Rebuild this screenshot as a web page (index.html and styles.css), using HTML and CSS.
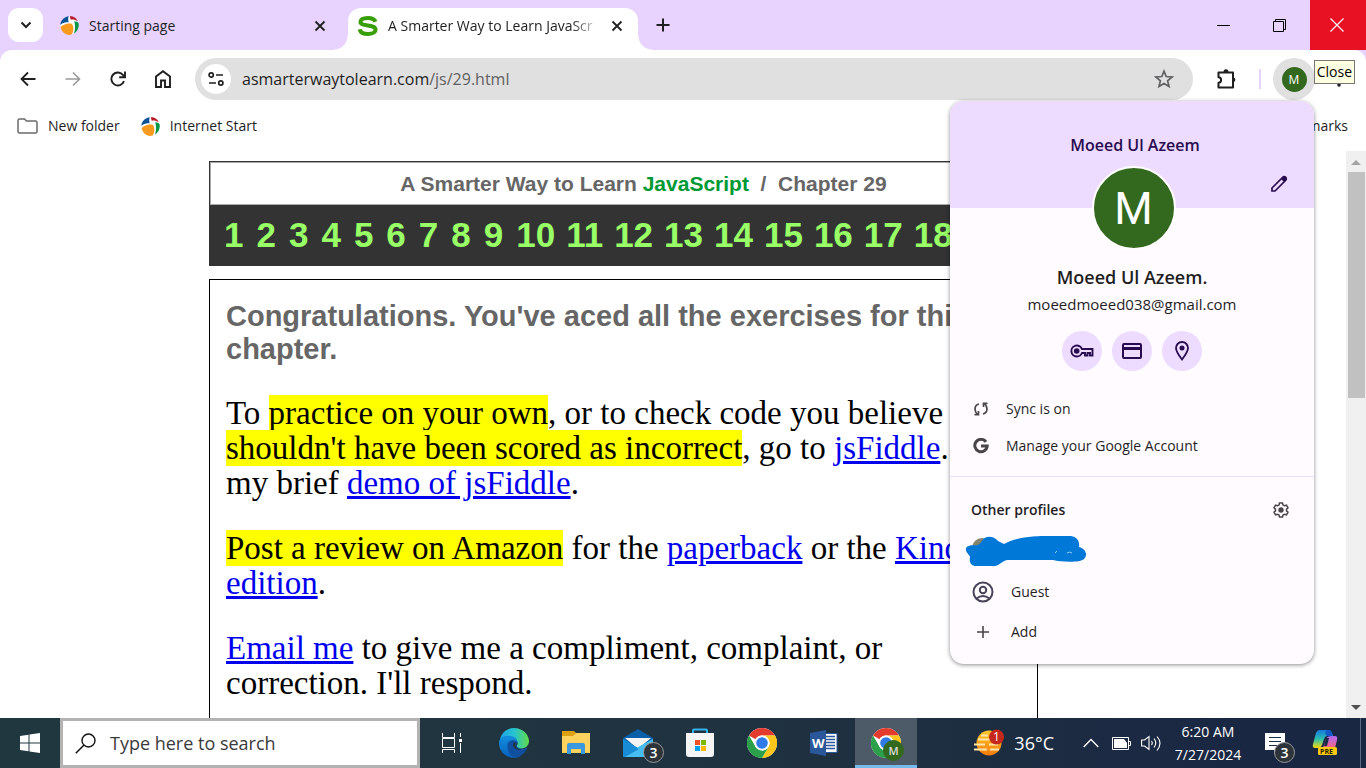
FILE: index.html
```html
<!DOCTYPE html>
<html lang="en">
<head>
<meta charset="utf-8">
<title>A Smarter Way to Learn JavaScript</title>
<link rel="stylesheet" href="styles.css">
</head>
<body>
<svg class="defs" aria-hidden="true">
  <symbol id="ball" viewBox="0 0 18 18">
    <circle cx="9" cy="9" r="8.5" fill="#fff"/>
    <path d="M0.3 8.2C.8 4 4 .8 8.2.3C7.5 3 7.8 4.500 8.200 6C5 6 2.500 6.500.3 8.200Z" fill="#0b5394"/>
    <path d="M9.500 0C13 .2 15.500 2 16.800 4.800C14.500 3.400 12 3 10.200 3.500C9.600 2.300 9.400 1.200 9.500 0Z" fill="#b81c2c"/>
    <path d="M13.500 5C15.500 5 17 5.800 17.700 7.200C18.300 11 16.300 14.800 13.300 16.700C14.500 12.500 14.500 8.500 13.500 5Z" fill="#0a9648"/>
    <path d="M.6 10.500C3.500 7.500 8 6.500 11.500 7.500C13.200 10.500 13 14.500 11 17.600C6 19 1.500 15.800.6 10.500Z" fill="#f79a1e"/>
  </symbol>
  <symbol id="chrome" viewBox="0 0 30 30">
    <circle cx="15" cy="15" r="15" fill="#fff"/>
    <path d="M15 0A15 15 0 0 1 28 7.500H15A7.500 7.500 0 0 0 8.500 11.250L2 7.500A15 15 0 0 1 15 0Z" fill="#e33b2e"/>
    <path d="M2 7.500L8.500 18.750A7.500 7.500 0 0 0 15 22.500L15 30A15 15 0 0 1 2 7.500Z" fill="#2b9f4a"/>
    <path d="M28 7.500A15 15 0 0 1 15 30L21.500 18.750A7.500 7.500 0 0 0 15 7.500Z" fill="#fcc61a"/>
    <path d="M8.500 18.750A7.500 7.500 0 0 0 21.500 18.750L15 30C13 27 10.500 23 8.500 18.750Z" fill="#2b9f4a"/>
    <circle cx="15" cy="15" r="7.500" fill="#fff"/>
    <circle cx="15" cy="15" r="5.800" fill="#2f7bea"/>
  </symbol>
  <symbol id="cross" viewBox="0 0 12 12"><path d="M1.500 1.500L10.500 10.500M10.500 1.500L1.500 10.500" stroke="currentColor" stroke-width="1.800" fill="none"/></symbol>
</svg>

<header class="tabstrip">
  <button class="tabsearch" aria-label="Search tabs"><svg width="12" height="8" viewBox="0 0 12 8"><path d="M1.500 1.500L6 6L10.500 1.500" stroke="#1f1f1f" stroke-width="2" fill="none"/></svg></button>
  <div class="tab">
    <svg width="19" height="19"><use href="#ball"/></svg>
    <span class="tabtitle">Starting page</span>
    <button class="plain" aria-label="Close tab"><svg width="12" height="12"><use href="#cross"/></svg></button>
  </div>
  <div class="tab active">
    <svg width="20" height="20" viewBox="0 0 20 20"><path d="M17.500 5.800C16.500 3.400 13.600 2 10 2C5.600 2 2.500 3.400 2.500 6C2.500 11 17.500 7.800 17.500 13.500C17.500 16.400 14.200 18 10 18C5.600 18 2.300 16.400 1.800 13.300" stroke="#379e06" stroke-width="4" fill="none"/></svg>
    <span class="tabtitle fade">A Smarter Way to Learn JavaScr</span>
    <button class="plain" aria-label="Close tab"><svg width="12" height="12"><use href="#cross"/></svg></button>
  </div>
  <button class="plain newtab" aria-label="New tab"><svg width="14" height="14" viewBox="0 0 14 14"><path d="M7 .5V13.500M.5 7H13.500" stroke="#1f1f1f" stroke-width="2"/></svg></button>
  <div class="wincontrols">
    <button aria-label="Minimize"><svg width="13" height="13" viewBox="0 0 13 13"><path d="M0 6.500H13" stroke="#000"/></svg></button>
    <button aria-label="Restore"><svg width="13" height="13" viewBox="0 0 13 13"><path d="M.5 2.500H10.500V12.500H.5ZM2.500 2.500V.5H12.500V10.500H10.500" stroke="#000" fill="none"/></svg></button>
    <button class="close" aria-label="Close"><svg width="14" height="14" viewBox="0 0 14 14"><path d="M.5.5L13.500 13.500M13.500.5L.5 13.500" stroke="#fff" stroke-width="1.200"/></svg></button>
  </div>
</header>

<div class="chrome">
  <nav class="toolbar">
    <button class="plain nav" aria-label="Back"><svg width="16" height="16" viewBox="0 0 16 16"><path d="M15.500 8H2M8 1.500L1.500 8L8 14.500" stroke="#1f1f1f" stroke-width="1.800" fill="none"/></svg></button>
    <button class="plain nav" aria-label="Forward"><svg width="16" height="16" viewBox="0 0 16 16"><path d="M.5 8H14M8 1.500L14.500 8L8 14.500" stroke="#9a9a9a" stroke-width="1.600" fill="none"/></svg></button>
    <button class="plain nav" aria-label="Reload"><svg width="16" height="16" viewBox="0 0 16 16"><path d="M14 10.200A6.500 6.500 0 1 1 13.200 4.200L14.500 5.800M15 .5V6.300H9.200" stroke="#1f1f1f" stroke-width="1.900" fill="none"/></svg></button>
    <button class="plain nav" aria-label="Home"><svg width="16" height="18" viewBox="0 0 16 18"><path d="M1 17V6.500L8 1.200L15 6.500V17H10V10.500H6V17Z" stroke="#1f1f1f" stroke-width="1.900" fill="none"/></svg></button>
    <div class="omnibox">
      <button class="siteinfo" aria-label="Site information"><svg width="16" height="14" viewBox="0 0 16 14" fill="none" stroke="#1f1f1f" stroke-width="1.700"><circle cx="3.200" cy="3" r="2.100"/><path d="M8 3H15M1 11H8"/><circle cx="12.800" cy="11" r="2.100"/></svg></button>
      <div class="url" role="textbox" aria-label="Address" tabindex="0">asmarterwaytolearn.com<span>/js/29.html</span></div>
      <button class="plain" aria-label="Bookmark this tab"><svg width="20" height="20" viewBox="0 0 20 20"><path d="M10 2.200L12.200 7.500L18 8L13.600 11.800L15 17.400L10 14.400L5 17.400L6.400 11.800L2 8L7.800 7.500Z" fill="none" stroke="#5f6062" stroke-width="1.700"/></svg></button>
    </div>
    <button class="plain ext" aria-label="Extensions"><svg width="22" height="22" viewBox="0 0 22 22"><path d="M2.500 4.500H17V19.500H2.500V14.800C6 14.500 6 9.500 2.500 9.200Z" fill="none" stroke="#1f1f1f" stroke-width="2" stroke-linejoin="round"/><path d="M7.500 4A2.500 2.700 0 0 1 12.500 4ZM17.500 9.200A2.600 2.600 0 0 1 17.500 14.200Z" fill="#1f1f1f"/></svg></button>
    <span class="divider"></span>
    <button class="avatarbtn" aria-label="Profile"><span class="avatar">M</span></button>
    <button class="plain more" aria-label="Menu"><svg width="4" height="16" viewBox="0 0 4 16" fill="#1f1f1f"><circle cx="2" cy="2" r="1.800"/><circle cx="2" cy="8" r="1.800"/><circle cx="2" cy="14" r="1.800"/></svg></button>
  </nav>
  <nav class="bookmarks">
    <a href="#"><svg width="21" height="16" viewBox="0 0 21 16"><path d="M1 2.500Q1 1 2.500 1H7.500L9.500 3H18.500Q20 3 20 4.500V13.500Q20 15 18.500 15H2.500Q1 15 1 13.500Z" fill="none" stroke="#6b6b6b" stroke-width="1.500"/></svg>New folder</a>
    <a href="#"><svg width="19" height="19"><use href="#ball"/></svg>Internet Start</a>
    <a href="#" class="all">All Bookmarks</a>
  </nav>
</div>

<div class="viewport">
  <main class="page">
    <div class="banner">
      <h1>A Smarter Way to Learn <em>JavaScript</em> &nbsp;/&nbsp; Chapter 29</h1>
      <nav class="numbers">
        <a href="#">1</a><a href="#">2</a><a href="#">3</a><a href="#">4</a><a href="#">5</a><a href="#">6</a><a href="#">7</a><a href="#">8</a><a href="#">9</a><a href="#" class="wide">10</a><a href="#" class="wide">11</a><a href="#" class="wide">12</a><a href="#" class="wide">13</a><a href="#" class="wide">14</a><a href="#" class="wide">15</a><a href="#" class="wide">16</a><a href="#" class="wide">17</a><a href="#" class="wide">18</a>
      </nav>
    </div>
    <article class="content">
      <h2>Congratulations. You've aced all the exercises for this<br>chapter.</h2>
      <p>To <mark>practice on your own</mark>, or to check code you believe<br><mark>shouldn't have been scored as incorrect</mark>, go to <a href="#">jsFiddle</a>.<br>my brief <a href="#">demo of jsFiddle</a>.</p>
      <p><mark>Post a review on Amazon</mark> for the <a href="#">paperback</a> or the <a href="#">Kindle<br>edition</a>.</p>
      <p><a href="#">Email me</a> to give me a compliment, complaint, or<br>correction. I'll respond.</p>
    </article>
  </main>
  <div class="scrollbar" aria-hidden="true">
    <svg width="10" height="21" viewBox="0 0 10 21"><path d="M0 14L5 9L10 14Z" fill="#a3a3a3"/></svg>
    <div class="track"><div class="thumb"></div></div>
    <svg width="10" height="21" viewBox="0 0 10 21"><path d="M0 8L5 13L10 8Z" fill="#505050"/></svg>
  </div>
</div>

<footer class="taskbar">
  <button class="start" aria-label="Start"><svg width="20" height="20" viewBox="0 0 20 20" fill="#fff"><path d="M0 3L8.500 1.700V9.500H0ZM9.500 1.500L20 0V9.500H9.500ZM0 10.500H8.500V18.300L0 17ZM9.500 10.500H20V20L9.500 18.500Z"/></svg></button>
  <label class="search"><svg width="21" height="21" viewBox="0 0 21 21"><circle cx="13.500" cy="7.500" r="6.500" fill="none" stroke="#111" stroke-width="1.400"/><path d="M9 12L.8 20.200" stroke="#111" stroke-width="1.500"/></svg><input type="text" placeholder="Type here to search" aria-label="Type here to search"></label>
  <div class="apps">
    <button aria-label="Task View"><svg width="20" height="20" viewBox="0 0 20 20" fill="none" stroke="#fff"><path d="M.5 0V4.500H12.500V0M.5 5.500V14.500H12.500V5.500ZM.5 20V16.500H12.500V20M18.500 0V4M18.500 10V20"/><path d="M17 6H20V9H17Z" fill="#fff" stroke="none"/></svg></button>
    <button aria-label="Edge"><svg width="30" height="30" viewBox="0 0 30 30"><defs><linearGradient id="e1"><stop offset="0" stop-color="#1fa4e8"/><stop offset=".5" stop-color="#27c3cf"/><stop offset="1" stop-color="#63dc49"/></linearGradient><linearGradient id="e2" x2="0" y2="1"><stop offset="0" stop-color="#1390df"/><stop offset="1" stop-color="#075fbb"/></linearGradient></defs><path d="M1 12C2 5 8 0 15 0C24 0 30 7 30 13C30 18 26 20.500 22 20.500C19 20.500 16 19.500 18 17.500C20 14 17 9 11 8.500C6 8 2 10 1 12Z" fill="url(#e1)"/><path d="M0 15C0 10 5 7 10 8C16 8 19 12 18.500 15C16 12 10 14 10 19C10 25 16 29 22 28C13 33 0 27 0 15Z" fill="url(#e2)"/><path d="M8.500 18C8 12 15 10.500 18.500 14C16 16 17 20 22 20.800C25 21 27 20 28.500 19.500C26 26 19 31 13 28C10 26 8.500 22 8.500 18Z" fill="#104f9d"/><path d="M17 15C15 18 18 21.500 22 21.500C19 23 14 20 14 17C14.500 14.500 16 14 17 15Z" fill="#203640"/></svg></button>
    <button aria-label="File Explorer"><svg width="28" height="24" viewBox="0 0 28 24"><path d="M0 0H12L14 2H28V8H0Z" fill="#dda011"/><path d="M0 5H11L14 2H28V22H0Z" fill="#ffd25d"/><path d="M5 23V14Q5 12 7 12H21Q23 12 23 14V23H19V18H9V23Z" fill="#3b97de"/></svg></button>
    <button aria-label="Mail" class="badged"><svg width="30" height="29" viewBox="0 0 30 29"><path d="M0 9L15 0L30 9V28H0Z" fill="#0960a8"/><path d="M2 9H28L15 20Z" fill="#f4f4f4"/><path d="M0 10L15 19L30 10V28H0Z" fill="#1e96df"/><path d="M0 28L17 17L30 10V28Z" fill="#45bdf2"/><path d="M0 10L16 20L2 28H0Z" fill="#198cd6"/></svg><span class="badge">3</span></button>
    <button aria-label="Store"><svg width="30" height="30" viewBox="0 0 30 30"><path d="M8 5V2.500Q8 1.500 9 1.500H21Q22 1.500 22 2.500V5" fill="none" stroke="#36b2ed" stroke-width="2"/><path d="M1 5H29V26Q29 29 26 29H4Q1 29 1 26Z" fill="#f5f5f5"/><path d="M10 12H15V17H10Z" fill="#ef5127"/><path d="M16 12H21V17H16Z" fill="#7eb900"/><path d="M10 18H15V23H10Z" fill="#08a1ef"/><path d="M16 18H21V23H16Z" fill="#fdb900"/></svg></button>
    <button aria-label="Chrome"><svg width="30" height="30"><use href="#chrome"/></svg></button>
    <button aria-label="Word"><svg class="word" width="28" height="26" viewBox="0 0 28 26"><path d="M14 3.500H27V22.500H14Z" fill="#fff" stroke="#2a579a"/><path d="M15 6.500H25M15 9.500H25M15 12.500H25M15 15.500H25M15 18.500H25" stroke="#2a579a" stroke-width="1.300"/><path d="M0 3L16 0V26L0 23Z" fill="#2a579a"/><text x="2" y="18" class="wordmark">W</text></svg></button>
    <button aria-label="Chrome, running" class="running badged"><svg width="30" height="30"><use href="#chrome"/></svg><span class="badge green">M</span></button>
  </div>
  <div class="tray">
    <button class="weather"><svg width="30" height="28" viewBox="0 0 30 28"><defs><linearGradient id="w" x2="0" y2="1"><stop offset="0" stop-color="#ffca28"/><stop offset="1" stop-color="#f57a0b"/></linearGradient></defs><circle cx="15" cy="14" r="12.500" fill="url(#w)"/><path d="M7 6.500H14M4 10.500H17M0 15.500H11M0 20.500H13M16 20.500H25M15 15.500H24" stroke="#ffe6aa" stroke-width="2"/><circle cx="22.500" cy="8" r="7.500" fill="#c5281c"/><text x="19" y="12" class="count">1</text></svg><span>36°C</span></button>
    <button aria-label="Hidden icons"><svg width="16" height="10" viewBox="0 0 16 10"><path d="M.7 9L8 1.500L15.300 9" stroke="#fff" stroke-width="1.300" fill="none"/></svg></button>
    <button aria-label="Battery" class="battery"><svg width="19" height="13" viewBox="0 0 19 13"><path d="M.5.5H16.500V12.500H.5ZM17 4.500H18.500V8.500H17" fill="none" stroke="#fff"/><path d="M2 2H12L15 6V11H2Z" fill="#fff"/></svg></button>
    <button aria-label="Volume"><svg width="21" height="18" viewBox="0 0 21 18" fill="none" stroke="#fff" stroke-width="1.100"><path d="M.6 6H3.500L8 2.500V15.500L3.500 12H.6Z"/><path d="M10.500 7Q12 9 10.500 11M13 4.500Q16.500 9 13 13.500M16 2.500Q22 9 16 16.500"/></svg></button>
    <div class="clock"><time>6:20 AM</time><time>7/27/2024</time></div>
    <button aria-label="Notifications" class="badged notes"><svg width="20" height="21" viewBox="0 0 20 21"><path d="M0 0H20V17H13L9 21V17H0Z" fill="#fff"/><path d="M4 4.500H16M4 8.500H16M4 12.500H12" stroke="#1c2f44" stroke-width="1.200"/></svg><span class="badge">3</span></button>
    <button aria-label="Copilot"><svg width="26" height="26" viewBox="0 0 26 26"><defs><linearGradient id="c1" x2="0" y2="1"><stop offset="0" stop-color="#1577dd"/><stop offset=".5" stop-color="#2bbfae"/><stop offset="1" stop-color="#f5d80b"/></linearGradient><linearGradient id="c2" x2="0" y2="1"><stop offset="0" stop-color="#ad69f2"/><stop offset="1" stop-color="#fa6584"/></linearGradient></defs><path d="M8 0H17Q19 0 20 3L21 6H15Q13 6 12 9L10 15Q9 18 6 18H3Q0 18 1 14L4 3Q5 0 8 0Z" fill="url(#c1)"/><path d="M15 0H17Q19 0 20 3L21 6H15L13 3Z" fill="#1557c8"/><path d="M20 6H23Q26 6 25 10L23 18H11L14 9Q15 6 20 6Z" fill="url(#c2)"/><path d="M14 8L12 16H15L17 8Z" fill="#1c2944"/><rect x="6" y="17" width="19" height="8" rx="1.500" fill="#ffc90d"/><text x="8" y="24" class="pre">PRE</text></svg></button>
  </div>
</footer>

<aside class="profile" aria-label="Profile menu">
  <div class="cover"><span>Moeed Ul Azeem</span><button class="plain edit" aria-label="Edit profile"><svg width="18" height="18" viewBox="0 0 18 18"><path d="M2 16V13L12.500 2.500Q14 1 15.500 2.500Q17 4 15.500 5.500L5 16Z" fill="none" stroke="#290b50" stroke-width="1.700"/><path d="M11 4L14 1Q17 1 17 4L14 7Z" fill="#290b50"/></svg></button></div>
  <div class="face">M</div>
  <h3>Moeed Ul Azeem.</h3>
  <p class="mail">moeedmoeed038@gmail.com</p>
  <div class="shortcuts">
    <button aria-label="Passwords"><svg width="24" height="14" viewBox="0 0 24 14" fill="none" stroke="#290b50" stroke-width="1.900"><path d="M12 5H22.500V11.500H20V9H17.500V11.500H15V9H12Q10.500 12.500 6.700 12.500A5.500 5.500 0 1 1 12 5Z"/><circle cx="6.700" cy="7" r="2.800" fill="#290b50" stroke="none"/></svg></button>
    <button aria-label="Payments"><svg width="20" height="16" viewBox="0 0 20 16"><rect x="1" y="1" width="18" height="14" rx="1" fill="none" stroke="#290b50" stroke-width="2"/><path d="M1 4H19V7H1Z" fill="#290b50"/></svg></button>
    <button aria-label="Addresses"><svg width="14" height="20" viewBox="0 0 14 20"><path d="M7 18.500C3.500 14 1 10.500 1 7A6 6 0 0 1 13 7C13 10.500 10.500 14 7 18.500Z" fill="none" stroke="#290b50" stroke-width="1.800"/><circle cx="7" cy="7" r="2.500" fill="#290b50"/></svg></button>
  </div>
  <div class="menu">
    <button><svg width="16" height="16" viewBox="0 0 16 16" fill="none" stroke="#484649" stroke-width="1.700"><path d="M6 3Q2 4 2 8Q2 11 4.500 13.500M1.500 13.700H5.500V10M10 13Q14 12 14 8Q14 5 11.500 2.500M14.500 2.300H10.500V6"/></svg>Sync is on</button>
    <button><svg width="16" height="16" viewBox="0 0 16 16"><path d="M13 3.800A6.200 6.200 0 1 0 14.200 8H8" fill="none" stroke="#484649" stroke-width="3"/></svg>Manage your Google Account</button>
  </div>
  <div class="others">
    <div class="othershead"><h4>Other profiles</h4><button class="plain" aria-label="Manage profiles"><svg width="16" height="16" viewBox="0 0 16 16"><path d="M6.500 1H9.500L10 3L11.500 3.800L13.500 3.200L15 5.800L13.500 7.200V8.800L15 10.200L13.500 12.800L11.500 12.200L10 13L9.500 15H6.500L6 13L4.500 12.200L2.500 12.800L1 10.200L2.500 8.800V7.200L1 5.800L2.500 3.200L4.500 3.800L6 3Z" fill="none" stroke="#484649" stroke-width="1.500"/><circle cx="8" cy="8" r="2.700" fill="#484649"/></svg></button></div>
    <svg class="scribble" width="122" height="32" viewBox="0 0 122 32"><circle cx="17" cy="13" r="10" fill="#85846f"/><path d="M4 11C8 9 13 13 17 6C20 0 29 1 33 6L39 9C50 2 70 1 84 1H106C112 2 115 6 114 12C121 14 123 20 119 24C115 28 96 27 88 25H42C35 27 34 32 26 31H11C6 31 4 27 5 22C4 19 0 17 1 13Q2 11 4 11Z" fill="#0078d8"/><path d="M90 18L92 16M102 18Q105 16 107 18" stroke="#9cccf2" fill="none"/></svg>
    <button class="person"><svg width="22" height="22" viewBox="0 0 22 22" fill="none" stroke="#484459" stroke-width="2"><circle cx="11" cy="11" r="9.500"/><circle cx="11" cy="9" r="3.200"/><path d="M4.500 17.500Q11 12.500 17.500 17.500"/></svg>Guest</button>
    <button class="person"><svg width="22" height="22" viewBox="0 0 22 22"><path d="M11 5V17M5 11H17" stroke="#484649" stroke-width="1.600"/></svg>Add</button>
  </div>
</aside>
<div class="tooltip" role="tooltip">Close</div>
</body>
</html>
```
FILE: styles.css
```css
* { box-sizing: border-box; }
body { margin: 0; height: 100vh; display: flex; flex-direction: column; overflow: hidden; position: relative; background: #fff; color: #1f1f1f; font: 14px/20px "Open Sans", "Noto Sans", sans-serif; }
button { font: inherit; color: inherit; border: 0; padding: 0; background: none; display: flex; align-items: center; justify-content: center; flex: none; }
svg { display: block; flex: none; }
.defs { display: none; }

/* tab strip */
.tabstrip { height: 50px; flex: none; display: flex; align-items: flex-start; background: #e8d3ff; padding-left: 8px; }
.tabsearch { width: 35px; height: 34px; margin-top: 8px; border-radius: 11px; background: #fff; }
.tab { display: flex; align-items: center; gap: 10px; height: 42px; margin-top: 8px; padding: 0 22px 7px 17px; width: 305px; }
.tab.active { position: relative; width: 290px; padding: 0 15px 7px 10px; background: #fff; border-radius: 13px 13px 0 0; }
.tab.active::before, .tab.active::after { content: ""; position: absolute; bottom: 0; width: 14px; height: 14px; }
.tab.active::before { left: -14px; background: radial-gradient(circle at 0 0, #e8d3ff 13px, #fff 14px); }
.tab.active::after { right: -14px; background: radial-gradient(circle at 100% 0, #e8d3ff 13px, #fff 14px); }
.tabtitle { flex: 1; min-width: 0; white-space: nowrap; }
.fade { -webkit-mask-image: linear-gradient(90deg, #000 86%, transparent 100%); mask-image: linear-gradient(90deg, #000 86%, transparent 100%); }
.newtab { margin: 18px 0 0 18px; }
.wincontrols { display: flex; margin-left: auto; }
.wincontrols button { width: 56px; height: 50px; padding-right: 6px; }
.wincontrols .close { background: #e81123; padding-right: 2px; }

/* toolbar */
.chrome { flex: none; height: 101px; background: linear-gradient(#e8d3ff 12px, #fff 12px); }
.toolbar { display: flex; align-items: center; height: 58px; padding: 0 25px 0 5px; background: #fff; border-radius: 12px 12px 0 0; }
.nav { width: 45px; height: 45px; }
.omnibox { display: flex; align-items: center; flex: 1; height: 42px; margin-left: 10px; padding: 0 19px 0 6px; border-radius: 21px; background: #e0e0e0; }
.siteinfo { width: 30px; height: 30px; border-radius: 50%; background: #fff; }
.url { flex: 1; margin-left: 11px; font-size: 16px; white-space: nowrap; }
.url span { color: #606060; }
.ext { margin-left: 23px; }
.divider { width: 2px; height: 20px; margin: 0 12px 0 21px; background: #e8d3ff; }
.avatarbtn { width: 42px; height: 42px; border-radius: 50%; background: #e0e0e0; }
.avatar { width: 25px; height: 25px; border-radius: 50%; background: #33691e; color: #fff; font-size: 12px; line-height: 25px; text-align: center; }
.more { margin-left: 22px; }
.bookmarks { display: flex; align-items: center; gap: 21px; height: 36px; padding: 0 18px 0 17px; }
.bookmarks a { display: flex; align-items: center; gap: 10px; color: inherit; text-decoration: none; }
.bookmarks .all { margin-left: auto; }

/* page */
.viewport { flex: 1; min-height: 0; display: flex; overflow: hidden; }
.page { flex: 1; min-width: 0; padding: 10px 308px 0 209px; }
.banner { background: #333; padding: 1px; }
h1 { margin: 0; background: #fff; border: 1px solid #aaa; color: #666; text-align: center; font: bold 21px/41px "Liberation Sans", Arial, sans-serif; white-space: nowrap; padding-left: 40px; }
h1 em { font-style: normal; color: #093; }
.numbers { display: flex; gap: 13px; height: 60px; padding: 2px 14px; overflow: hidden; font: bold 35px/56px "Liberation Sans", Arial, sans-serif; }
.numbers a { color: #9f6; text-decoration: none; }
.numbers .wide + .wide { margin-left: -2px; }
.content { margin-top: 13px; padding: 20px 16px; border: 1px solid #000; min-height: 900px; }
h2 { margin: 0; color: #666; font: bold 29px/33px "Liberation Sans", Arial, sans-serif; white-space: nowrap; }
.content p { margin: 30px 0; color: #000; font: 33px/35px "Liberation Serif", serif; white-space: nowrap; }
mark { background: #ff0; color: #000; }
.content a { color: #00e; text-decoration-thickness: 3px; }
.scrollbar { display: flex; flex-direction: column; align-items: center; width: 20px; flex: none; background: #f0f0f0; }
.track { flex: 1; width: 17px; }
.thumb { width: 17px; height: 43%; background: #c1c1c1; }

/* taskbar */
.taskbar { flex: none; display: flex; height: 50px; color: #fff; background: linear-gradient(90deg, #20373f, #203540 35%, #1e3040 65%, #1a2743 90%); }
.start { width: 60px; }
.search { display: flex; align-items: center; gap: 14px; width: 360px; padding: 0 12px; border: 3px solid #b3b3b3; background: #fff; }
.search input { flex: 1; min-width: 0; border: 0; outline: 0; padding: 0; font: 18px/24px "Open Sans", sans-serif; }
.search input::placeholder { color: #3a3a3a; opacity: 1; }
.apps { display: flex; padding-left: 1px; }
.apps button { width: 62px; height: 50px; }
.badged { position: relative; }
.badge { position: absolute; left: 36px; top: 24px; width: 21px; height: 21px; border: 1px solid #999; border-radius: 50%; background: #2c343a; color: #fff; font-size: 14px; font-weight: 600; line-height: 19px; text-align: center; }
.badge.green { left: 28px; top: 22px; border-color: #33691e; background: #33691e; color: #ddd; font-size: 11px; }
.apps .running { background: #4d5b68; border-bottom: 3px solid #76b9ed; }
.apps .running svg { margin-top: 3px; }
.wordmark { font: bold 13px "Open Sans", sans-serif; fill: #fff; }
.tray { display: flex; align-items: center; margin-left: auto; padding-right: 22px; border-right: 1px solid #5d6880; margin-right: 5px; }
.weather { gap: 10px; margin-right: 29px; font-size: 18px; }
.count { font: 12px "Open Sans", sans-serif; fill: #fff; }
.pre { font: bold 7px "Open Sans", sans-serif; fill: #2a2300; }
.battery { margin: 0 10px 0 13px; }
.clock { display: flex; flex-direction: column; align-items: center; width: 92px; line-height: 23px; font-size: 14px; }
.notes { margin: 0 27px 0 11px; height: 50px; }
.notes .badge { left: 9px; }

/* profile menu */
.profile { position: absolute; top: 101px; right: 52px; width: 364px; height: 563px; border-radius: 14px; overflow: hidden; background: #fffbff; box-shadow: 0 1px 4px rgba(0, 0, 0, .45); display: flex; flex-direction: column; align-items: center; }
.cover { position: relative; align-self: stretch; flex: none; height: 107px; padding: 33px 0 0 6px; background: #eddcff; color: #290b50; text-align: center; font-size: 16px; line-height: 22px; font-weight: 600; }
.edit { position: absolute; right: 26px; top: 74px; }
.face { position: relative; flex: none; width: 84px; height: 84px; margin: -42px 0 0 3px; border: 2px solid #fff; border-radius: 50%; background: #33691e; color: #fff; font: 44px/82px Roboto, sans-serif; text-align: center; }
.profile h3 { margin: 15px 0 0; font-size: 18px; line-height: 24px; font-weight: 600; }
.mail { margin: 5px 0 0; font-size: 15px; line-height: 20px; }
.shortcuts { display: flex; gap: 10px; margin-top: 17px; }
.shortcuts button { width: 40px; height: 40px; border-radius: 50%; background: #eddcff; }
.menu { align-self: stretch; display: flex; flex-direction: column; padding: 19px 23px 12px; border-bottom: 1px solid #eddcff; }
.menu button { height: 37px; gap: 17px; justify-content: flex-start; }
.others { align-self: stretch; display: flex; flex-direction: column; padding: 22px 25px 0 21px; }
.othershead { display: flex; justify-content: space-between; align-items: center; }
.profile h4 { margin: 0; font-size: 14px; line-height: 22px; font-weight: 600; }
.scribble { margin: 14px 0 5px -6px; }
.person { height: 40px; gap: 17px; justify-content: flex-start; padding-left: 1px; }
.tooltip { position: absolute; top: 60px; right: 11px; padding: 1px 2px; border: 1px solid #767676; background: #ffffe1; color: #000; font-size: 14px; line-height: 20px; }
```
